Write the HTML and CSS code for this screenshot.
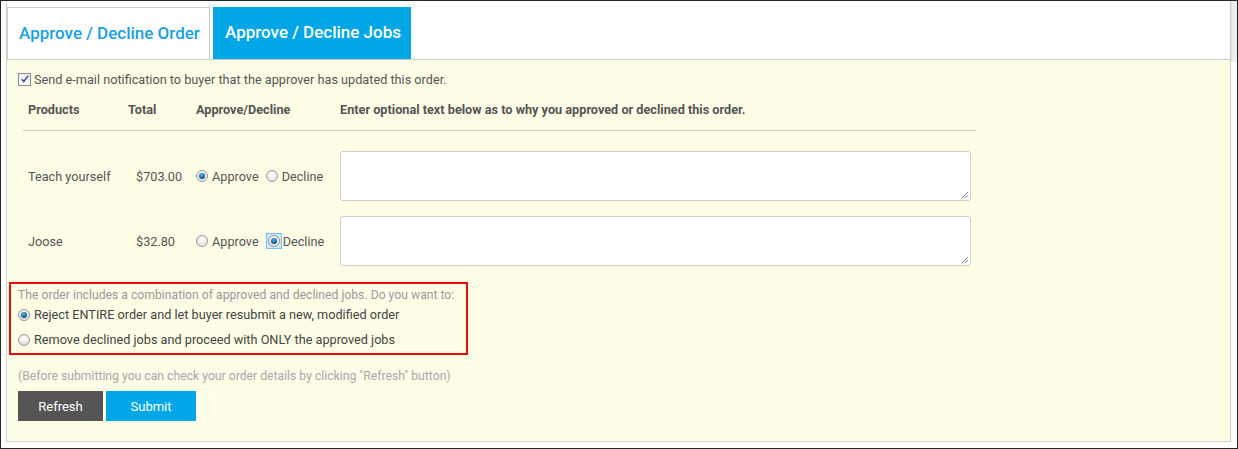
FILE: index.html
```html
<!DOCTYPE html>
<html>
<head>
<meta charset="utf-8">
<link rel="stylesheet" href="styles.css">
</head>
<body>
<div class="frame">
  <div class="wrapper">
    <div class="tabbar">
      <div class="tab tab-light">Approve / Decline Order</div>
      <div class="tab tab-active">Approve / Decline Jobs</div>
    </div>
    <div class="panel">
      <div class="notify">
        <span class="checkbox"><svg viewBox="0 0 12 12" width="10" height="10"><path d="M2 6.2 L4.6 9 L10 2" fill="none" stroke="#3c4fa0" stroke-width="1.8"/></svg></span>
        <span>Send e-mail notification to buyer that the approver has updated this order.</span>
      </div>
      <div class="jobs">
        <div class="row head">
          <div class="c1">Products</div>
          <div class="c2">Total</div>
          <div class="c3">Approve/Decline</div>
          <div class="c4">Enter optional text below as to why you approved or declined this order.</div>
        </div>
        <div class="body-rows">
          <div class="row">
            <div class="c1">Teach yourself</div>
            <div class="c2 amt">$703.00</div>
            <div class="c3"><span class="radio on"></span><span class="lbl">Approve</span><span class="radio"></span><span class="lbl">Decline</span></div>
            <div class="c4"><div class="textarea"><span class="grip"></span></div></div>
          </div>
          <div class="row">
            <div class="c1">Joose</div>
            <div class="c2 amt">$32.80</div>
            <div class="c3"><span class="radio"></span><span class="lbl">Approve</span><span class="focus"><span class="radio on"></span></span><span class="lbl lbl-tight">Decline</span></div>
            <div class="c4"><div class="textarea"><span class="grip"></span></div></div>
          </div>
        </div>
      </div>
      <div class="choice">
        <div class="choice-q">The order includes a combination of approved and declined jobs. Do you want to:</div>
        <div class="choice-opt"><span class="radio on"></span><span>Reject ENTIRE order and let buyer resubmit a new, modified order</span></div>
        <div class="choice-opt"><span class="radio"></span><span>Remove declined jobs and proceed with ONLY the approved jobs</span></div>
      </div>
      <div class="hint">(Before submitting you can check your order details by clicking "Refresh" button)</div>
      <div class="buttons">
        <button class="btn btn-dark">Refresh</button>
        <button class="btn btn-blue">Submit</button>
      </div>
    </div>
  </div>
  <div class="scroll"><div class="scroll-track"></div></div>
</div>
</body>
</html>
```
FILE: styles.css
```css
* { box-sizing: border-box; }
html, body { margin: 0; padding: 0; background: #fff; }
body { font-family: Roboto, "Liberation Sans", sans-serif; font-size: 12.7px; color: #555; }
.frame {
  width: 1238px; height: 449px;
  border: 1px solid #262626;
  padding: 0 0 6px 5px;
  display: flex;
  background: #fff;
}
.wrapper {
  flex: 1;
  display: flex; flex-direction: column;
  border-left: 1px solid #cfcfcf;
  border-right: 1px solid #cfcfcf;
  border-bottom: 1px solid #cfcfcf;
}
.scroll { width: 6px; }
.scroll-track { height: 61px; background: #eeeeee; border-left: 1px solid #e2e2e2; }
.tabbar {
  height: 59px;
  padding-top: 6px;
  display: flex; gap: 3px;
  border-bottom: 1px solid #cbcbcb;
}
.tab {
  height: 52px;
  display: flex; align-items: center;
  font-size: 17px; font-weight: 500;
  white-space: nowrap;
  padding: 0 0 2px 11px;
}
.tab-light { width: 203px; border: 1px solid #cfcfcf; border-bottom: none; color: #1a9fe2; }
.tab-active { width: 198px; background: #00a6e6; color: #fff; padding-left: 12px; }
.panel {
  flex: 1;
  background: #fefee6;
  padding: 12px 0 0 11px;
}
.notify { display: flex; align-items: center; gap: 3px; height: 14px; color: #555; }
.checkbox {
  width: 13px; height: 13px;
  border: 1px solid #8a8a9a;
  background: linear-gradient(#eef0f6, #fff);
  display: inline-flex; align-items: center; justify-content: center;
}
.jobs { width: 953px; margin: 8px 0 0 5px; }
.row { display: grid; grid-template-columns: 100px 68px 144px 1fr; align-items: center; }
.row > div { padding-left: 5px; }
.amt { padding-left: 13px !important; }
.head { height: 37px; border-bottom: 1px solid #cccccc; font-weight: 700; color: #555; padding-bottom: 5px; }
.body-rows { padding-top: 20px; display: flex; flex-direction: column; gap: 15px; }
.body-rows .row { height: 50px; }
.c3 { display: flex; align-items: center; }
.lbl { margin: 0 7px 0 4px; }
.lbl-tight { margin-left: 1px; }
.textarea {
  width: 631px; height: 50px;
  background: #fff; border: 1px solid #cfcfcf; border-radius: 3px;
  position: relative;
}
.grip {
  position: absolute; right: 2px; bottom: 2px; width: 6px; height: 6px;
  background: linear-gradient(135deg, transparent 45%, #888 45%, #888 55%, transparent 55%, transparent 70%, #888 70%, #888 80%, transparent 80%);
}
.radio {
  width: 12px; height: 12px; border-radius: 50%;
  border: 1px solid #9a9a9a;
  background: radial-gradient(circle at 50% 35%, #fff, #d8d8d8);
  display: inline-block; position: relative; flex: none;
}
.radio.on::after {
  content: ""; position: absolute; left: 2px; top: 2px; width: 6px; height: 6px; border-radius: 50%;
  background: radial-gradient(circle at 45% 35%, #5bb6ea, #0b4f86 70%);
}
.focus {
  display: inline-flex; align-items: center; justify-content: center;
  width: 16px; height: 16px; border: 1px solid #79c0ea; background: #cde8f8; margin-left: 0;
}
.choice {
  width: 459px; margin: 16px 0 0 -9px;
  border: 2px solid #e60d0d;
  padding: 4px 0 1px 7px;
}
.choice-q { color: #9a9a9a; font-size: 12.2px; height: 14px; line-height: 14px; }
.choice-opt { display: flex; align-items: center; gap: 4px; height: 25px; color: #444; }
.hint { color: #a8a8a8; margin-top: 13px; font-size: 12.2px; line-height: 16px; }
.buttons { display: flex; gap: 3px; margin-top: 7px; }
.btn {
  height: 30px; border: none; color: #fff; font-family: inherit; font-size: 13px;
  padding: 0; cursor: pointer;
}
.btn-dark { width: 85px; background: #555555; }
.btn-blue { width: 90px; background: #00a6e6; }
```
